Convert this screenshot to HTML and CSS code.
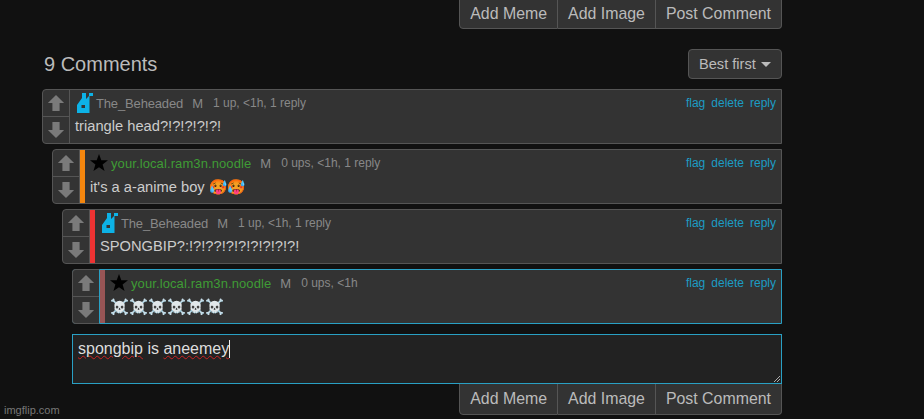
FILE: index.html
```html
<!DOCTYPE html>
<html lang="en">
  <head>
    <meta charset="UTF-8" />
    <title>Comments</title>
    <link rel="stylesheet" href="styles.css">
  </head>
  <body>
    <svg class="defs" width="0" height="0">
      <symbol id="arrow-up" viewBox="0 0 20 20"><path d="M10 1 19 10H14V19H6V10H1Z" /></symbol>
      <symbol id="arrow-down" viewBox="0 0 20 20"><path d="M10 19 1 10H6V1H14V10H19Z" /></symbol>
      <symbol id="badge" viewBox="0 0 16 20"><path d="M0 12 5 5V0H9V6L12 3V0H16V3H12.5V20H0ZM4.5 12V15H8V12Z" fill-rule="evenodd" /></symbol>
      <symbol id="star" viewBox="0 0 20 20"><path d="M10 0 12.6 7H20L14 11.6 16.2 19 10 14.6 3.8 19 6 11.6 0 7H7.4Z" /></symbol>
    </svg>

    <div class="page">
      <div class="actions actions-top">
        <button>Add Meme</button>
        <button>Add Image</button>
        <button>Post Comment</button>
      </div>

      <div class="comments-head">
        <h2>9 Comments</h2>
        <button class="sort">Best first <span class="caret"></span></button>
      </div>

      <div class="comment">
        <div class="votes">
          <button><svg><use href="#arrow-up" /></svg></button>
          <button><svg><use href="#arrow-down" /></svg></button>
        </div>
        <div class="body">
          <div class="meta">
            <svg class="badge"><use href="#badge" /></svg>
            <a class="user">The_Beheaded</a>
            <span class="mod">M</span>
            <span class="stats">1 up, &lt;1h, 1 reply</span>
            <span class="links"><a>flag</a><a>delete</a><a>reply</a></span>
          </div>
          <p class="text">triangle head?!?!?!?!?!</p>
        </div>
      </div>

      <div class="comment depth-1">
        <div class="votes">
          <button><svg><use href="#arrow-up" /></svg></button>
          <button><svg><use href="#arrow-down" /></svg></button>
        </div>
        <div class="bar bar-orange"></div>
        <div class="body">
          <div class="meta">
            <svg class="star"><use href="#star" /></svg>
            <a class="user user-green">your.local.ram3n.noodle</a>
            <span class="mod">M</span>
            <span class="stats">0 ups, &lt;1h, 1 reply</span>
            <span class="links"><a>flag</a><a>delete</a><a>reply</a></span>
          </div>
          <p class="text">it's a a-anime boy 🥵🥵</p>
        </div>
      </div>

      <div class="comment depth-2">
        <div class="votes">
          <button><svg><use href="#arrow-up" /></svg></button>
          <button><svg><use href="#arrow-down" /></svg></button>
        </div>
        <div class="bar bar-red"></div>
        <div class="body">
          <div class="meta">
            <svg class="badge"><use href="#badge" /></svg>
            <a class="user">The_Beheaded</a>
            <span class="mod">M</span>
            <span class="stats">1 up, &lt;1h, 1 reply</span>
            <span class="links"><a>flag</a><a>delete</a><a>reply</a></span>
          </div>
          <p class="text">SPONGBIP?:!?!??!?!?!?!?!?!?!</p>
        </div>
      </div>

      <div class="comment depth-3 selected">
        <div class="votes">
          <button><svg><use href="#arrow-up" /></svg></button>
          <button><svg><use href="#arrow-down" /></svg></button>
        </div>
        <div class="bar bar-rose"></div>
        <div class="body">
          <div class="meta">
            <svg class="star"><use href="#star" /></svg>
            <a class="user user-green">your.local.ram3n.noodle</a>
            <span class="mod">M</span>
            <span class="stats">0 ups, &lt;1h</span>
            <span class="links"><a>flag</a><a>delete</a><a>reply</a></span>
          </div>
          <p class="text text-skulls">☠️☠️☠️☠️☠️☠️</p>
        </div>
      </div>

      <div class="reply-box depth-3">
        <span class="typo">spongbip</span> is <span class="typo">aneemey</span><span class="cursor"></span>
        <svg class="grip" viewBox="0 0 6 6"><path d="M0 6 6 0M3 6 6 3" /></svg>
      </div>

      <div class="actions actions-bottom">
        <button>Add Meme</button>
        <button>Add Image</button>
        <button>Post Comment</button>
      </div>
    </div>

    <div class="watermark">imgflip.com</div>
  </body>
</html>
```

FILE: styles.css
```css
html,
body {
  height: 419px;
  overflow: hidden;
}

body {
  margin: 0;
  background-color: #111;
  color: #ccc;
  font-family: "Liberation Sans", Arial, sans-serif;
}

.defs {
  display: block;
}

.page {
  width: 740px;
  margin-left: 42px;
}

button {
  font-family: inherit;
  color: #bbb;
  background-color: #333;
  border: 1px solid #555;
  cursor: pointer;
}

/* button groups, top one is cut off by the scroll */
.actions {
  display: flex;
  justify-content: flex-end;
}

.actions button {
  height: 31px;
  padding: 0 10px;
  font-size: 15.9px;
  border-left-width: 0;
}

.actions button:first-child {
  border-left-width: 1px;
  border-bottom-left-radius: 4px;
}

.actions button:last-child {
  border-bottom-right-radius: 4px;
}

.actions-top {
  margin-top: -2px;
}

.actions-bottom {
  margin-top: -1px;
}

.actions-bottom button {
  height: 32px;
}

.comments-head {
  display: flex;
  justify-content: space-between;
  align-items: center;
  margin-top: 20px;
  margin-bottom: 10px;
}

.comments-head h2 {
  margin: 0 0 0 2px;
  font-size: 20px;
  font-weight: normal;
  color: #bbb;
}

.sort {
  width: 94px;
  height: 30px;
  padding: 0 0 0 10px;
  font-size: 14.6px;
  text-align: left;
  border-radius: 4px;
}

.caret {
  display: inline-block;
  margin-left: 1px;
  vertical-align: 2px;
  border-top: 5px solid #bbb;
  border-left: 5px solid transparent;
  border-right: 5px solid transparent;
}

/* comments */
.comment {
  display: flex;
  height: 55px;
  margin-bottom: 5px;
  background-color: #333;
  border: 1px solid #555;
  border-radius: 4px 0 0 4px;
  box-sizing: border-box;
}

.depth-1 {
  margin-left: 10px;
}

.depth-2 {
  margin-left: 20px;
}

.depth-3 {
  margin-left: 30px;
}

.votes {
  display: flex;
  flex-direction: column;
  flex: none;
  width: 27px;
  box-sizing: border-box;
  border-right: 1px solid #555;
}

.votes button {
  flex: 1;
  padding: 0;
  border: none;
  background: none;
  display: flex;
  align-items: center;
  justify-content: center;
}

.votes button:first-child {
  border-bottom: 1px solid #555;
}

.votes svg {
  width: 18px;
  height: 18px;
  fill: #7a7a7a;
}

/* blue outline on the row, the votes column sits over it and keeps grey */
.selected {
  border-color: #29a0c4;
}

.selected .votes {
  width: 28px;
  margin: -1px 0 -1px -1px;
  background-color: #333;
  border: 1px solid #555;
  border-right-color: #29a0c4;
  border-radius: 4px 0 0 4px;
}

.bar {
  flex: none;
  width: 5px;
}

.bar-orange {
  background-color: #f4860e;
}

.bar-red {
  background-color: #e33;
}

.bar-rose {
  background-color: #955;
}

.body {
  flex: 1;
  min-width: 0;
  padding: 3px 5px 0 5px;
}

.meta {
  display: flex;
  align-items: center;
  height: 20px;
  font-size: 12px;
  color: #888;
}

.badge {
  flex: none;
  width: 16px;
  height: 20px;
  margin-left: 2px;
  margin-right: 3px;
  fill: #0db2e6;
}

.star {
  flex: none;
  width: 18px;
  height: 18px;
  margin-right: 3px;
  fill: #000;
}

.user {
  padding-top: 1px;
  font-size: 13px;
  letter-spacing: -0.15px;
  color: #888;
}

.user-green {
  letter-spacing: 0.1px;
  color: #3f9c35;
}

.mod {
  margin-left: 9px;
  padding-top: 1px;
  font-size: 13px;
}

.stats {
  margin-left: 10px;
}

.links {
  display: flex;
  gap: 6px;
  margin-left: auto;
  font-size: 12px;
  color: #1c9cc4;
}

.text {
  margin: 5px 0 0 0;
  font-size: 14.7px;
  color: #ccc;
}

.text-skulls {
  font-size: 15.3px;
}

/* reply box */
.reply-box {
  position: relative;
  height: 38px;
  margin-top: 10px;
  padding: 5px;
  font-size: 16px;
  line-height: 18px;
  color: #ddd;
  background-color: #222;
  border: 1px solid #29a0c4;
}

.typo {
  text-decoration: underline wavy #c22;
  text-decoration-thickness: 1px;
  text-underline-offset: 1px;
}

.cursor {
  display: inline-block;
  width: 1px;
  height: 18px;
  vertical-align: -4px;
  background-color: #eee;
}

.grip {
  position: absolute;
  right: 1px;
  bottom: 1px;
  width: 6px;
  height: 6px;
  stroke: #aaa;
  stroke-width: 1;
  fill: none;
}

.watermark {
  position: absolute;
  left: 4px;
  top: 404px;
  font-size: 11px;
  color: #777;
}
```
